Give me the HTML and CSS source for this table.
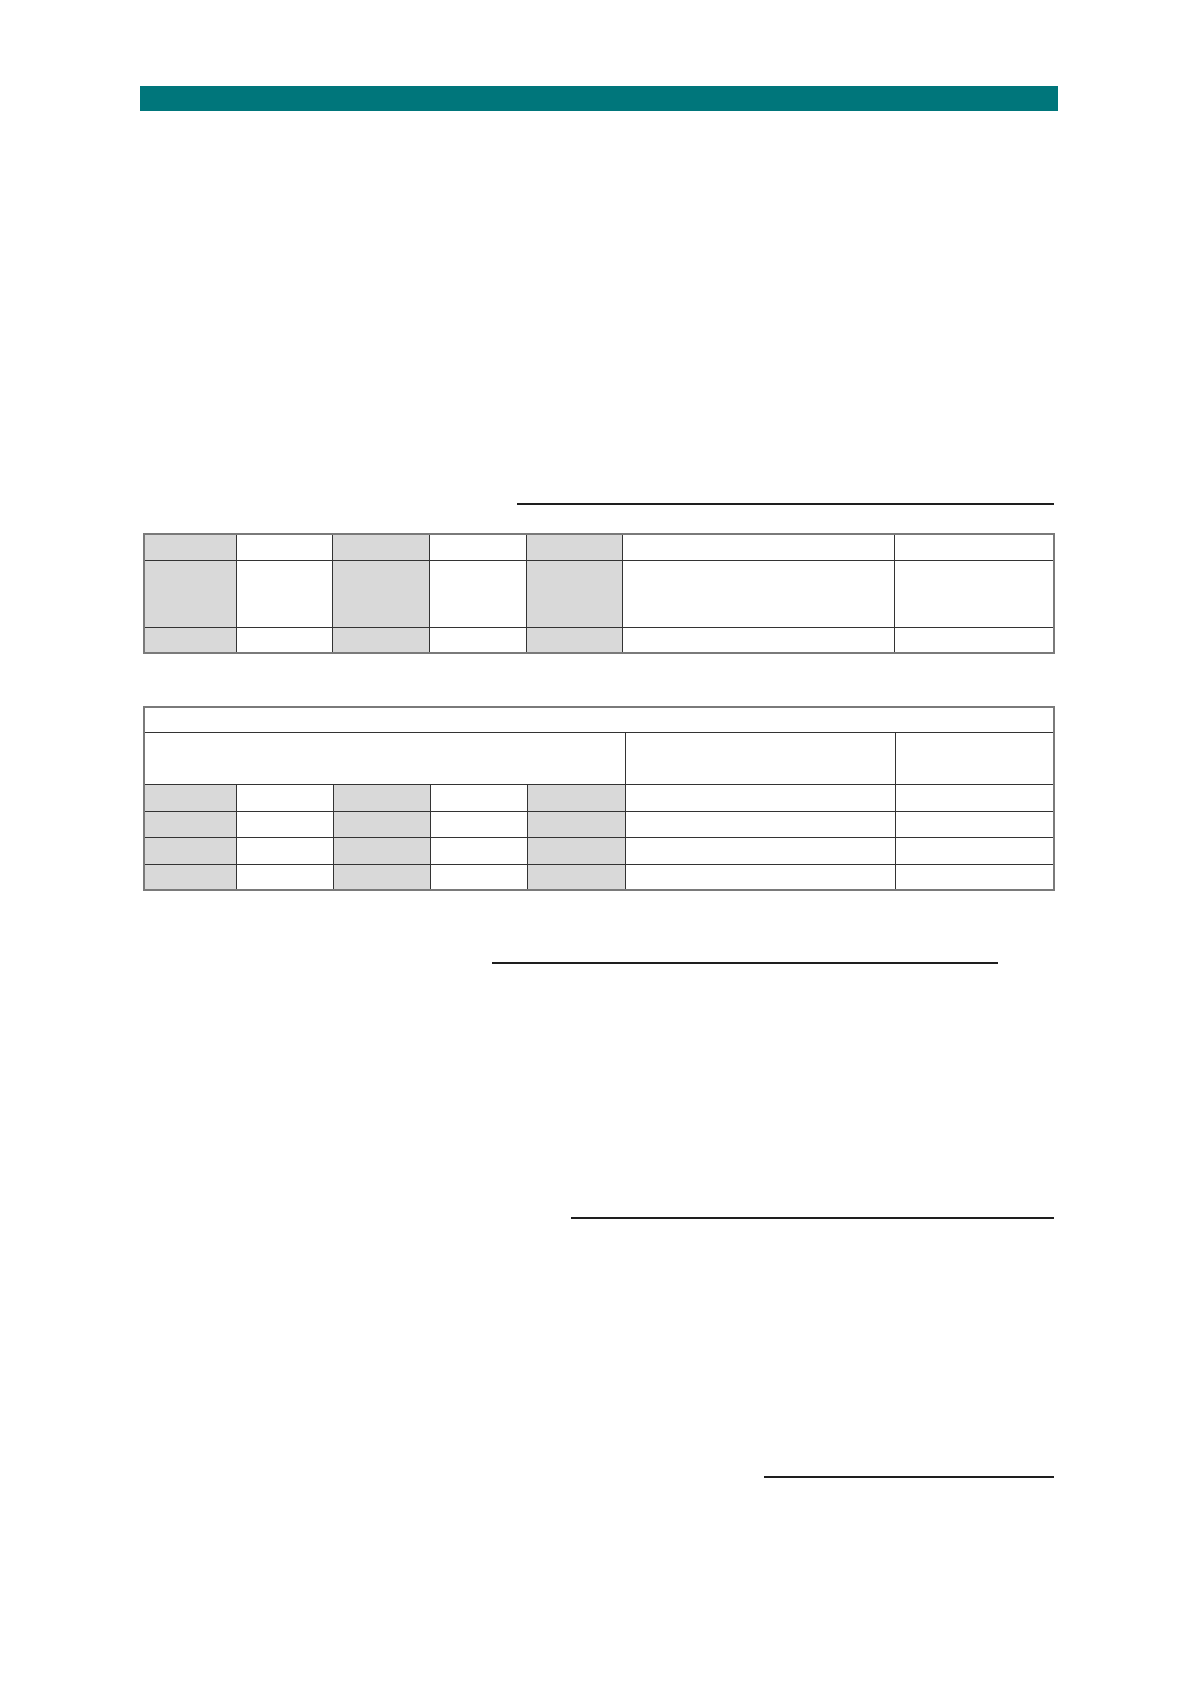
FILE: index.html
```html
<!DOCTYPE html>
<html>
<head>
<meta charset="utf-8">
<link rel="stylesheet" href="styles.css">
</head>
<body>
<div class="page">
  <div class="bar"></div>
  <div class="rule rule-1"></div>
  <table class="grid grid-1">
    <colgroup>
      <col class="c1"><col class="c2"><col class="c3"><col class="c4"><col class="c5"><col class="c6"><col class="c7">
    </colgroup>
    <tr class="r-s"><td class="g"></td><td></td><td class="g"></td><td></td><td class="g"></td><td></td><td></td></tr>
    <tr class="r-l"><td class="g"></td><td></td><td class="g"></td><td></td><td class="g"></td><td></td><td></td></tr>
    <tr class="r-s"><td class="g"></td><td></td><td class="g"></td><td></td><td class="g"></td><td></td><td></td></tr>
  </table>
  <table class="grid grid-2">
    <colgroup>
      <col class="d1"><col class="d2"><col class="d3"><col class="d4"><col class="d5"><col class="d6"><col class="d7">
    </colgroup>
    <tr class="r-h"><td colspan="7"></td></tr>
    <tr class="r-m"><td colspan="5"></td><td></td><td></td></tr>
    <tr class="r-a"><td class="g"></td><td></td><td class="g"></td><td></td><td class="g"></td><td></td><td></td></tr>
    <tr class="r-b"><td class="g"></td><td></td><td class="g"></td><td></td><td class="g"></td><td></td><td></td></tr>
    <tr class="r-a"><td class="g"></td><td></td><td class="g"></td><td></td><td class="g"></td><td></td><td></td></tr>
    <tr class="r-b"><td class="g"></td><td></td><td class="g"></td><td></td><td class="g"></td><td></td><td></td></tr>
  </table>
  <div class="rule rule-2"></div>
  <div class="rule rule-3"></div>
  <div class="rule rule-4"></div>
</div>
</body>
</html>
```
FILE: styles.css
```css
html, body {
  margin: 0;
  padding: 0;
  background: #ffffff;
  font-family: "Liberation Sans", Arial, sans-serif;
}
.page {
  width: 918px;
  margin-left: 140px;
  padding-top: 86px;
  padding-bottom: 200px;
}
.bar {
  height: 25px;
  background: #00767b;
}
.rule {
  border-top: 2px solid #1e1e1e;
  height: 0;
}
.rule-1 {
  margin-top: 392px;
  margin-left: 377px;
  width: 537px;
}
.grid {
  border-collapse: collapse;
  table-layout: fixed;
  width: 910px;
  margin-left: 3px;
  border: 2px solid #7a7a7a;
}
.grid td {
  border: 1px solid #333333;
  padding: 0;
  background: #ffffff;
}
.grid td.g {
  background: #d9d9d9;
}
.grid-1 {
  margin-top: 28px;
}
.grid-2 {
  margin-top: 52px;
}
.c1 { width: 92px; }
.c2 { width: 96px; }
.c3 { width: 97px; }
.c4 { width: 97px; }
.c5 { width: 96px; }
.c6 { width: 272px; }
.c7 { width: 160px; }
.d1 { width: 92px; }
.d2 { width: 97px; }
.d3 { width: 97px; }
.d4 { width: 97px; }
.d5 { width: 98px; }
.d6 { width: 270px; }
.d7 { width: 159px; }
.r-s { height: 26px; }
.r-l { height: 67px; }
.r-h { height: 25px; }
.r-m { height: 52px; }
.r-a { height: 27px; }
.r-b { height: 26px; }
.rule-2 {
  margin-top: 71px;
  margin-left: 352px;
  width: 506px;
}
.rule-3 {
  margin-top: 253px;
  margin-left: 431px;
  width: 483px;
}
.rule-4 {
  margin-top: 257px;
  margin-left: 624px;
  width: 290px;
}
```
